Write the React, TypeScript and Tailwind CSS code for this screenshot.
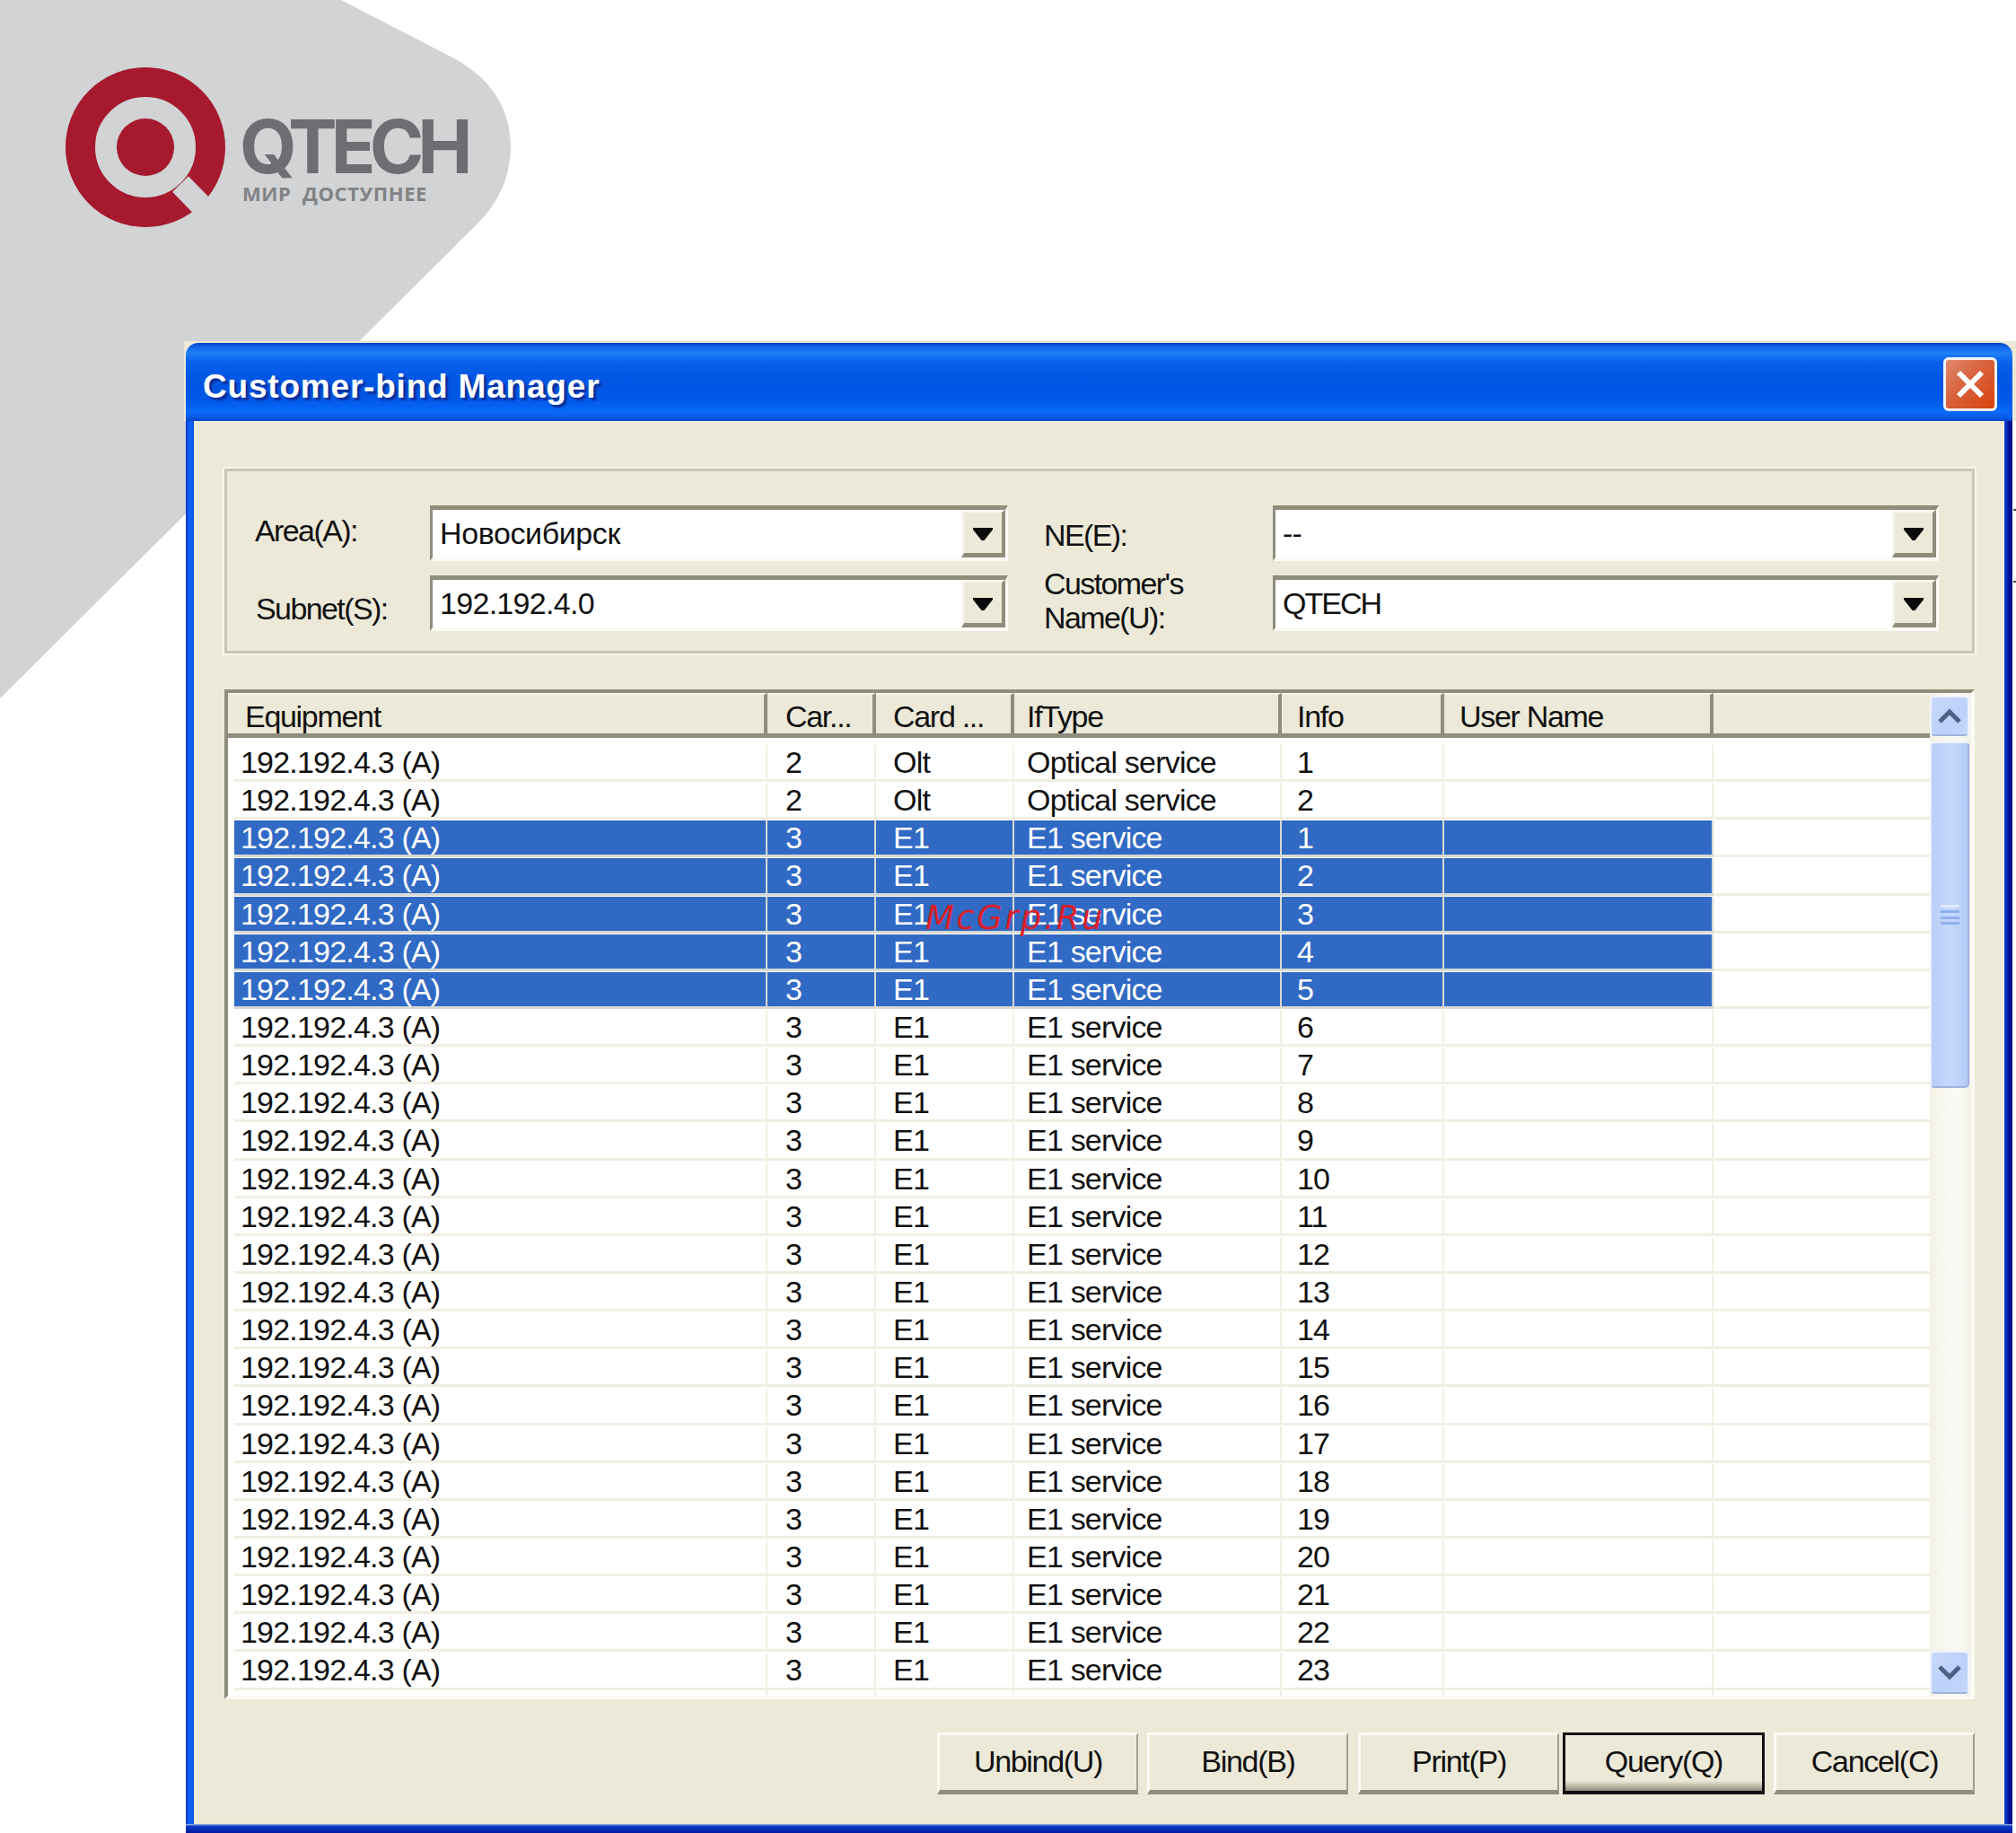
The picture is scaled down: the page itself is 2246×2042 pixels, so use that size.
const ROWS = [
  { ne: "192.192.4.3 (A)", card: "2", type: "Olt", ifType: "Optical service", info: "1", selected: false },
  { ne: "192.192.4.3 (A)", card: "2", type: "Olt", ifType: "Optical service", info: "2", selected: false },
  ...Array.from({ length: 23 }, (_, i) => ({
    ne: "192.192.4.3 (A)",
    card: "3",
    type: "E1",
    ifType: "E1 service",
    info: String(i + 1),
    selected: i < 5,
  })),
];

const GRID = "grid grid-cols-[601px_121px_154px_298px_181px_300px_1fr]";

const Arrow = () => (
  <svg className="mt-[2px]" width="22" height="14" viewBox="0 0 22 14">
    <path d="M0 0H22V2L12.500 14H9.500L0 2Z" fill="#0a0a0a" />
  </svg>
);

const Combo = ({ value, width, tracking }: { value: string; width: string; tracking: string }) => (
  <div
    className={`${width} h-[62px] flex border-t-[5px] border-l-[3px] border-r-[3px] border-b-[4px] border-t-[#8f8d7c] border-l-[#8f8d7c] border-r-[#fbfaf4] border-b-[#fbfaf4] bg-white`}
  >
    <div className={`flex-1 pl-[8px] text-[34px] leading-[52px] ${tracking} text-[#111]`}>
      {value}
    </div>
    <div className="w-[49px] flex items-center justify-center bg-[#ece9d8] border-t-[3px] border-l-[3px] border-t-[#f7f6ee] border-l-[#f7f6ee] border-r-[4px] border-b-[5px] border-r-[#8f8d7c] border-b-[#8f8d7c]">
      <Arrow />
    </div>
  </div>
);

const ActionButton = ({ label, focused, className }: { label: string; focused?: boolean; className?: string }) => (
  <div
    className={`h-[69px] flex items-center justify-center text-[34px] tracking-[-1.3px] text-[#111] ${
      focused
        ? "w-[225px] pb-[4px] border-[3px] border-[#111] border-b-[4px] bg-[linear-gradient(to_bottom,#ece9d8_82%,#8f8d7c)]"
        : "w-[224px] pb-[2px] border-t-[3px] border-l-[3px] border-r-[2px] border-b-[5px] border-t-[#fbfaf4] border-l-[#fbfaf4] border-r-[#a09e8c] border-b-[#8f8d7c] bg-[#ece9d8]"
    } ${className ?? ""}`}
  >
    {label}
  </div>
);

const HeaderCell = ({ label, pad }: { label: string; pad: string }) => (
  <div
    className={`h-[50px] ${pad} pt-[5px] flex items-center text-[34px] tracking-[-1.3px] text-[#111] border-t-[2px] border-t-[#f7f6ee] border-b-[5px] border-b-[#8f8d7c] border-r-[4px] border-r-[#8f8d7c]`}
  >
    {label}
  </div>
);

const ScrollButton = ({ up, height }: { up?: boolean; height: string }) => (
  <div
    className={`w-[44px] ${height} flex items-center justify-center rounded-[5px] border-[2px] border-[#eef3fd] border-b-[#9db4e0] bg-[linear-gradient(135deg,#c9d9fb,#bcd0fa_60%,#c6d8fc)]`}
  >
    <svg width="28" height="20" viewBox="0 0 28 20">
      <path
        d={up ? "M3 16L14 5L25 16" : "M3 4L14 15L25 4"}
        fill="none"
        stroke="#4d6185"
        strokeWidth="5"
      />
    </svg>
  </div>
);

export default function App() {
  return (
    <div className="relative w-[2246px] h-[2042px] overflow-hidden bg-white font-['Liberation_Sans',Arial,sans-serif]">
      {/* logo panel behind the dialog */}
      <svg className="absolute left-0 top-0" width="700" height="800" viewBox="0 0 700 800">
        <path d="M380 0L504 64Q569 98 569 166Q567 215 531 250L0 778V0Z" fill="#d1d3d4" />
        <ellipse cx="162" cy="164" rx="72.500" ry="72.500" fill="none" stroke="#a6192e" strokeWidth="33" />
        <circle cx="162" cy="164" r="32" fill="#a6192e" />
        <path d="M201 205L240 245" stroke="#d1d3d4" strokeWidth="25" fill="none" />
      </svg>
      <div className="absolute left-[267px] top-[126px] text-[82px] leading-[76px] font-bold tracking-[-7px] text-[#6d6e71] font-['Inter',sans-serif]">
        QTECH
      </div>
      <div className="absolute left-[270px] top-[202px] text-[22px] leading-[26px] font-bold tracking-[0.6px] text-[#808285] font-['Open_Sans',sans-serif] whitespace-pre">
        МИР  ДОСТУПНЕЕ
      </div>

      <div className="relative pl-[205px] pt-[380px]">
        {/* title bar */}
        <div className="pt-[2px] pl-[2px] pr-[4px] bg-[#ece9d8]">
          <div className="h-[87px] rounded-t-[14px] flex items-center justify-between pl-[19px] pr-[17px] bg-[linear-gradient(to_bottom,#0a3fc0_0%,#1164e8_5%,#1f7ff8_13%,#0860ec_26%,#0055e3_50%,#0057e6_72%,#0a6af8_88%,#0a5ce8_95%,#0048c8_100%)]">
            <div className="pt-[10px] text-[37px] font-bold text-white tracking-[0.8px] [text-shadow:3px_3px_2px_#0a2f9a]">
              Customer-bind Manager
            </div>
            <div className="mt-[5px] w-[60px] h-[60px] rounded-[6px] border-[3px] border-[#f4f4f4] flex items-center justify-center bg-[linear-gradient(135deg,#e08a6e,#d9623c_45%,#d8420f)]">
              <svg width="36" height="36" viewBox="0 0 36 36">
                <path d="M5 5L31 31M31 5L5 31" stroke="#fff" strokeWidth="6" />
              </svg>
            </div>
          </div>
        </div>

        <div className="ml-[2px] mr-[4px] h-[1563px] flex">
          <div className="w-[9px] bg-[linear-gradient(to_right,#0a3dd0,#1265f5,#0a50e8)]" />
          <div className="flex-1 bg-[#ece9d8] pt-[53px] pl-[34px] pr-[33px]">
            {/* filter box */}
            <div className="h-[206px] border-[3px] border-[#c9c6b4] outline outline-[2px] outline-[#f7f6ee] pt-[38px] pl-[31px] flex flex-col gap-[16px]">
              <div className="flex h-[62px]">
                <div className="w-[195px] pt-[3px] text-[34px] tracking-[-1.6px] text-[#111]">Area(A):</div>
                <Combo value="Новосибирск" width="w-[644px]" tracking="tracking-[-0.4px]" />
                <div className="w-[255px] ml-[40px] pt-[8px] text-[34px] tracking-[-1.6px] text-[#111]">NE(E):</div>
                <Combo value="--" width="w-[742px]" tracking="tracking-[-0.8px]" />
              </div>
              <div className="flex h-[62px]">
                <div className="w-[195px] pl-[1px] pt-[12px] text-[34px] tracking-[-1.6px] text-[#111]">Subnet(S):</div>
                <Combo value="192.192.4.0" width="w-[644px]" tracking="tracking-[-0.7px]" />
                <div className="w-[255px] ml-[40px] -mt-[10px] text-[34px] leading-[38px] tracking-[-1.6px] text-[#111]">
                  Customer's
                  <br />
                  Name(U):
                </div>
                <Combo value="QTECH" width="w-[742px]" tracking="tracking-[-2px]" />
              </div>
            </div>

            {/* list view */}
            <div className="mt-[40px] h-[1125px] flex bg-white border-t-[4px] border-l-[4px] border-r-[4px] border-b-[4px] border-t-[#8f8d7c] border-l-[#8f8d7c] border-r-[#fbfaf4] border-b-[#fbfaf4]">
              <div className="w-[1896px]">
                <div className={`${GRID} bg-[#ece9d8]`}>
                  <HeaderCell label="Equipment" pad="pl-[19px]" />
                  <HeaderCell label="Car..." pad="pl-[20px]" />
                  <HeaderCell label="Card ..." pad="pl-[19px]" />
                  <HeaderCell label="IfType" pad="pl-[14px]" />
                  <HeaderCell label="Info" pad="pl-[17px]" />
                  <HeaderCell label="User Name" pad="pl-[17px]" />
                  <div className="h-[50px] border-t-[2px] border-t-[#f7f6ee] border-b-[5px] border-b-[#8f8d7c]" />
                </div>
                <div className="pt-[7px]">
                  {ROWS.map((row, index) => {
                    const cell = row.selected
                      ? "bg-[#316ac5] text-white border-r-[2px] border-b-[3px] border-r-[#d8d8d2] border-b-[#d8d8d2]"
                      : "text-[#111] border-r-[2px] border-b-[3px] border-r-[#f1efe2] border-b-[#f1efe2]";
                    return (
                      <div key={index} className={`${GRID} h-[42.15px] pt-[1px] text-[34px] leading-[38px] tracking-[-0.8px]`}>
                        <div className={`${cell} ml-[7px] pl-[7px]`}>{row.ne}</div>
                        <div className={`${cell} pl-[20px]`}>{row.card}</div>
                        <div className={`${cell} pl-[19px]`}>{row.type}</div>
                        <div className={`${cell} pl-[14px]`}>{row.ifType}</div>
                        <div className={`${cell} pl-[17px]`}>{row.info}</div>
                        <div className={cell} />
                        <div className="border-b-[3px] border-b-[#f1efe2]" />
                      </div>
                    );
                  })}
                  <div className={`${GRID} h-[6px]`}>
                    <div className="border-r-[2px] border-r-[#f1efe2]" />
                    <div className="border-r-[2px] border-r-[#f1efe2]" />
                    <div className="border-r-[2px] border-r-[#f1efe2]" />
                    <div className="border-r-[2px] border-r-[#f1efe2]" />
                    <div className="border-r-[2px] border-r-[#f1efe2]" />
                    <div className="border-r-[2px] border-r-[#f1efe2]" />
                  </div>
                </div>
              </div>

              {/* scroll bar */}
              <div className="flex-1 flex flex-col items-start pt-[3px] pb-[2px] bg-[linear-gradient(to_right,#f3f1e6,#fbfbf6_60%,#f3f2e9)]">
                <ScrollButton up height="h-[45px]" />
                <div className="mt-[6px] w-[44px] h-[386px] flex items-center justify-center rounded-[5px] border-[2px] border-[#eef3fd] border-r-[#9db4e0] border-b-[#9db4e0] bg-[linear-gradient(to_right,#b9cef8,#c6d8fb_55%,#b2caf6)]">
                  <div className="w-[21px] h-[23px] flex flex-col justify-between">
                    <div className="h-[3px] bg-[#dfe9fd]" />
                    <div className="h-[3px] bg-[#8fb0ee]" />
                    <div className="h-[3px] bg-[#8fb0ee]" />
                    <div className="h-[3px] bg-[#8fb0ee]" />
                  </div>
                </div>
                <div className="flex-1" />
                <ScrollButton height="h-[48px]" />
              </div>
            </div>

            {/* action buttons */}
            <div className="mt-[37px] flex justify-end">
              <ActionButton label="Unbind(U)" className="mr-[10px]" />
              <ActionButton label="Bind(B)" className="mr-[11px]" />
              <ActionButton label="Print(P)" className="mr-[4px]" />
              <ActionButton label="Query(Q)" focused className="mr-[10px]" />
              <ActionButton label="Cancel(C)" />
            </div>
          </div>
          <div className="w-[9px] bg-[linear-gradient(to_right,#0a4ad8,#00149a,#000e8c)]" />
        </div>
        <div className="ml-[2px] mr-[4px] h-[10px] bg-[linear-gradient(to_bottom,#a9b8e0,#0a3cc8_25%,#001a9e)]" />
      </div>

      {/* site watermark */}
      <div className="absolute left-[1031px] top-[1001px] text-[37px] leading-[44px] italic tracking-[2.4px] text-[#d9202a] font-['DejaVu_Sans',sans-serif]">
        McGrp.Ru
      </div>
      <div className="absolute right-0 top-[567px] w-[3px] h-[2px] bg-[#444]" />
      <div className="absolute right-0 top-[647px] w-[3px] h-[2px] bg-[#444]" />
    </div>
  );
}
